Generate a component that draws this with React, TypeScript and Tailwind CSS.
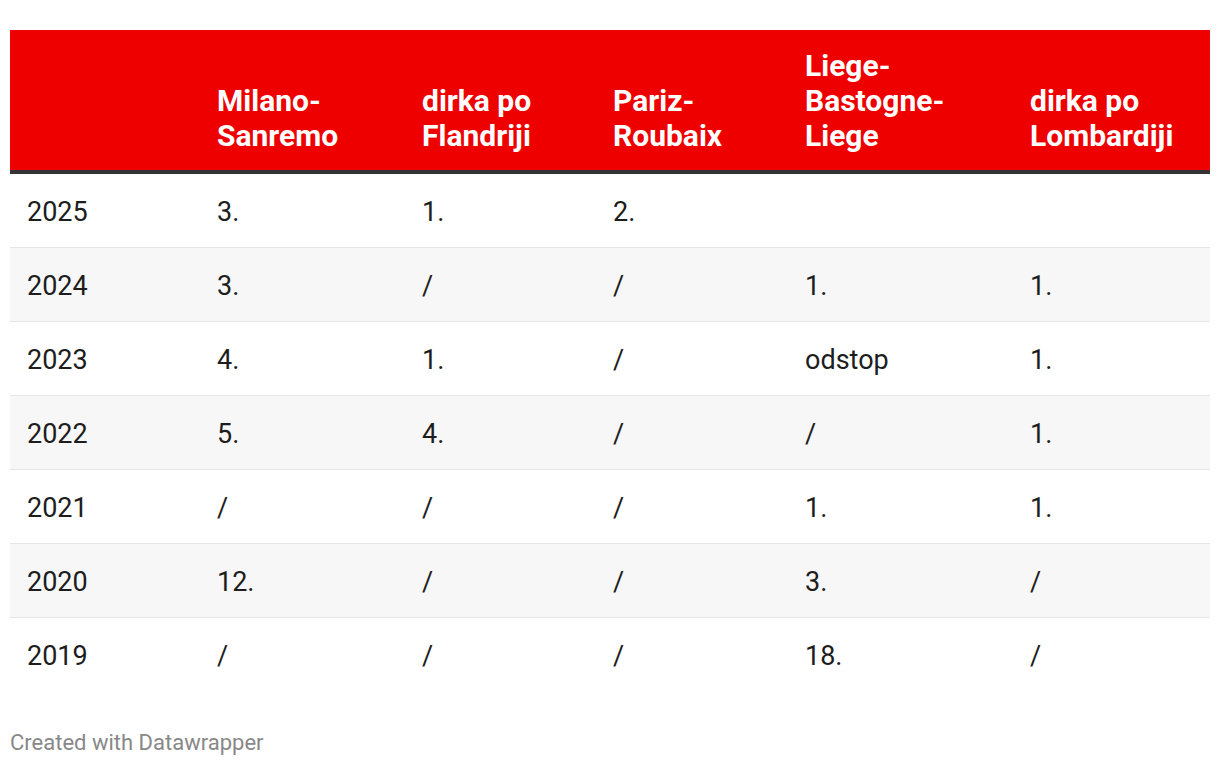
import React from 'react';

const columns = ['', 'Milano-\nSanremo', 'dirka po\nFlandriji', 'Pariz-\nRoubaix', 'Liege-\nBastogne-\nLiege', 'dirka po\nLombardiji'];

const rows: string[][] = [
  ['2025', '3.', '1.', '2.', '', ''],
  ['2024', '3.', '/', '/', '1.', '1.'],
  ['2023', '4.', '1.', '/', 'odstop', '1.'],
  ['2022', '5.', '4.', '/', '/', '1.'],
  ['2021', '/', '/', '/', '1.', '1.'],
  ['2020', '12.', '/', '/', '3.', '/'],
  ['2019', '/', '/', '/', '18.', '/'],
];

const gridCols = 'grid grid-cols-[190px_205px_191px_192px_225px_197px]';

const App: React.FC = () => {
  return (
    <div className="w-[1220px] h-[766px] bg-white pt-[30px] px-[10px] font-['Roboto',sans-serif]">
      <div className={`${gridCols} bg-[#ee0000] h-[140px] border-b-4 border-[#333333] box-content`}>
        {columns.map((col, i) => (
          <div key={i} className="flex items-end pl-[17px] pb-[17px]">
            <div className="text-white font-bold text-[30px] leading-[35px] whitespace-pre-line">{col}</div>
          </div>
        ))}
      </div>
      {rows.map((row, r) => (
        <div
          key={row[0]}
          className={`${gridCols} h-[74px] ${r % 2 === 1 ? 'bg-[#f7f7f7]' : 'bg-white'} ${r < rows.length - 1 ? 'border-b border-[#e6e6e6]' : ''}`}
        >
          {row.map((cell, c) => (
            <div key={c} className="flex items-center pl-[17px] pt-[3px] text-[27px] text-[#1d1d1d]">
              {cell}
            </div>
          ))}
        </div>
      ))}
      <div className="mt-[40px] text-[22px] text-[#888888] leading-none">Created with Datawrapper</div>
    </div>
  );
};

export default App;
